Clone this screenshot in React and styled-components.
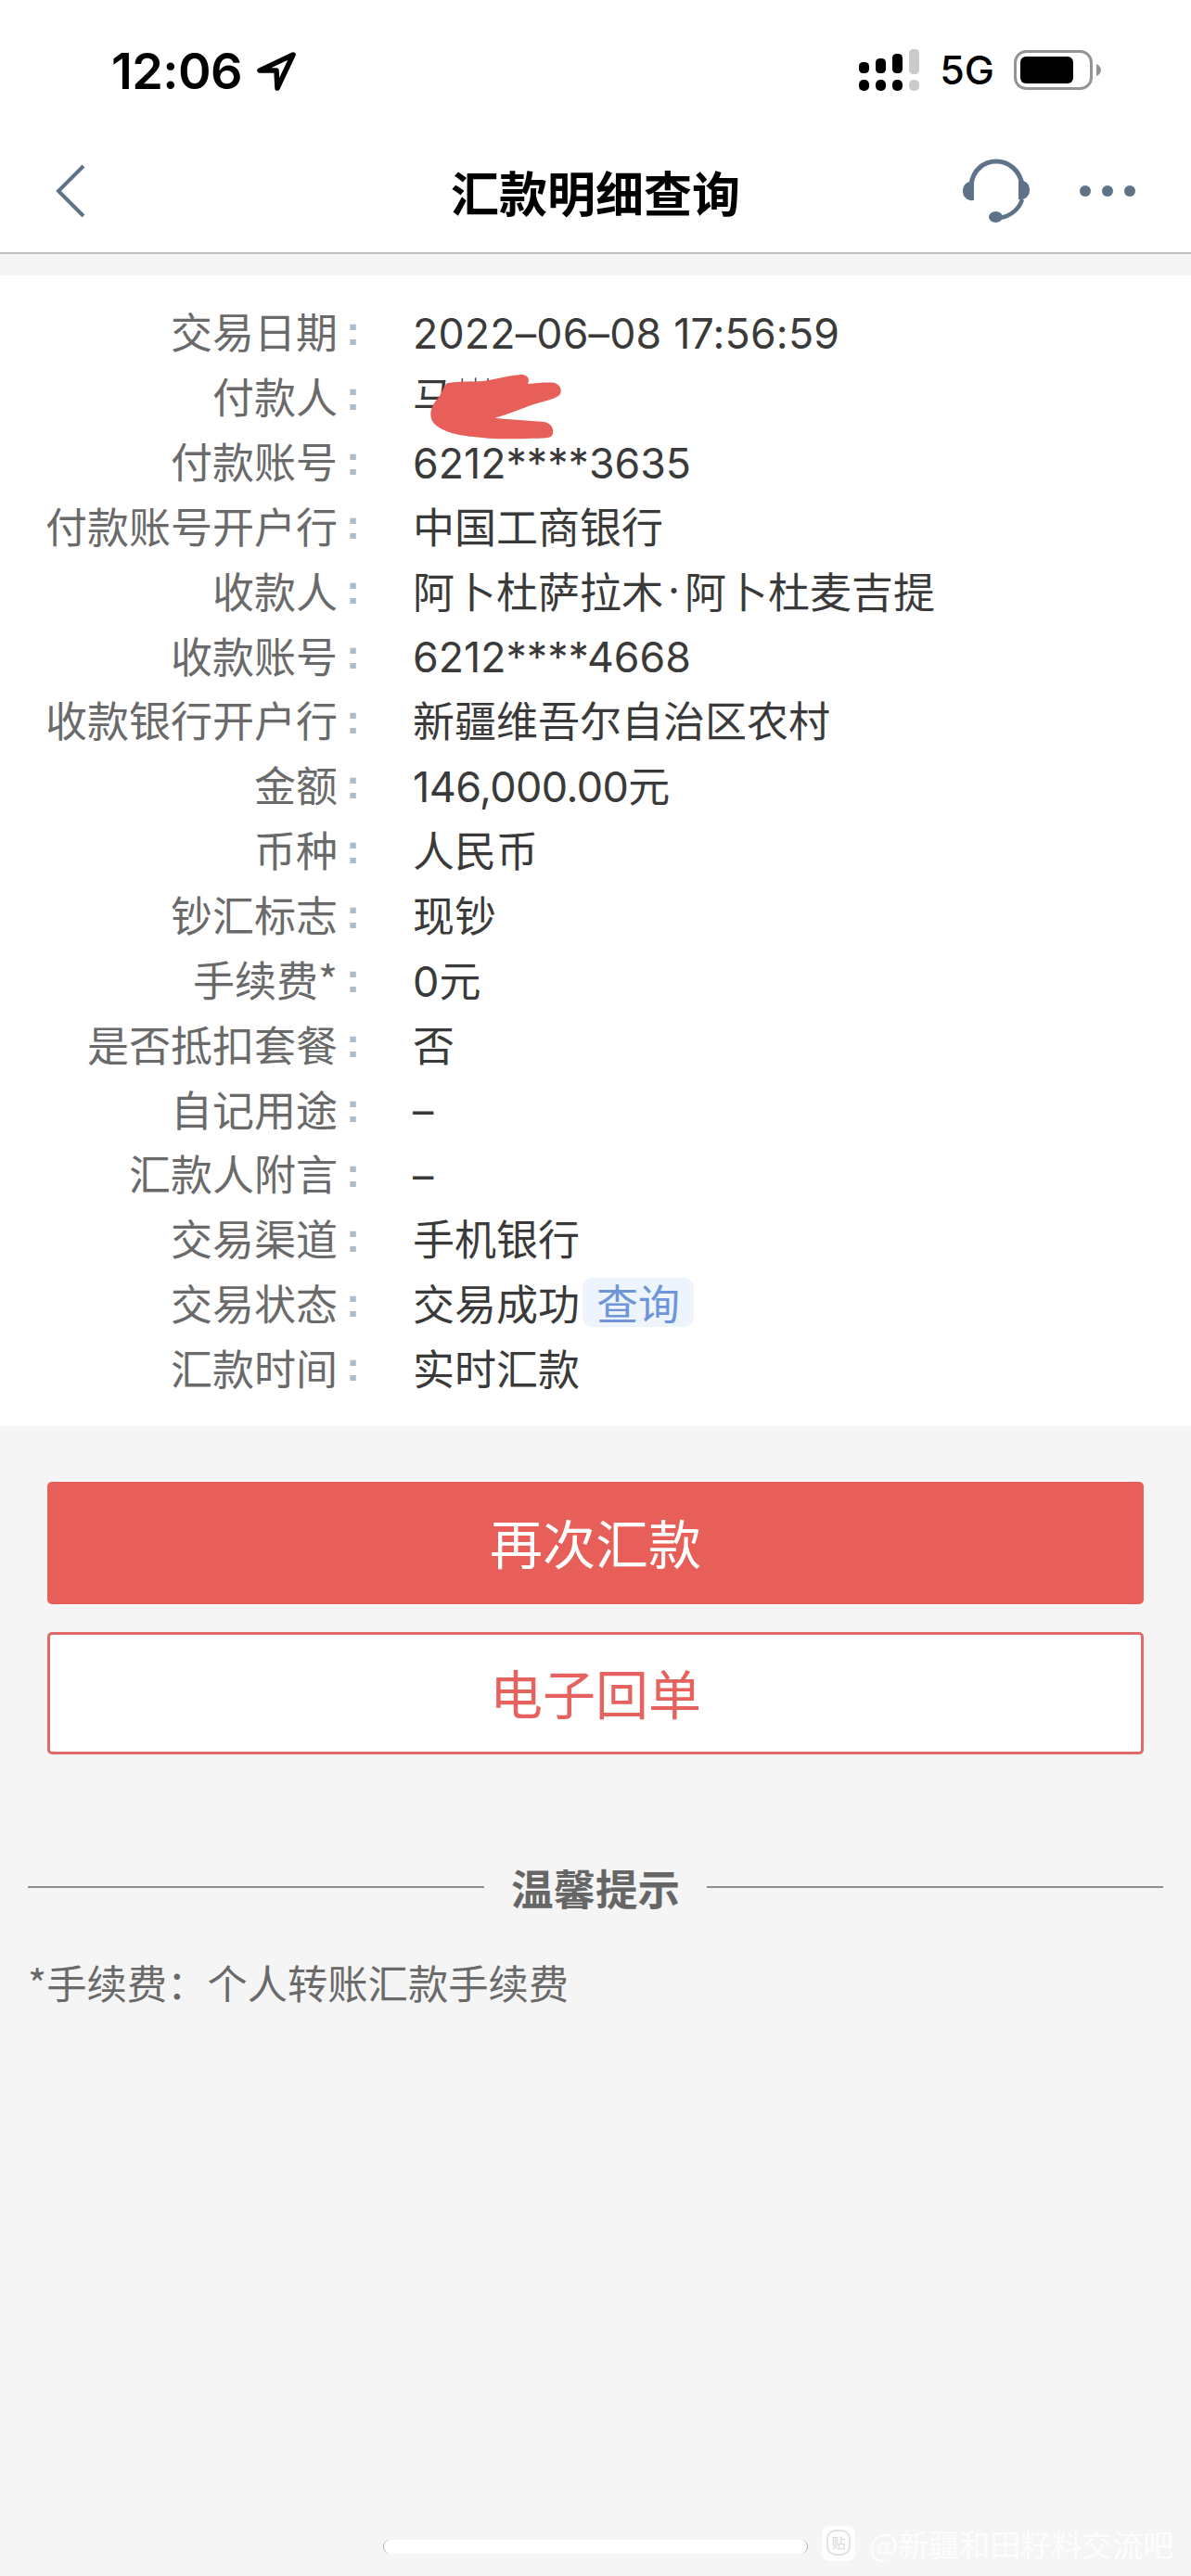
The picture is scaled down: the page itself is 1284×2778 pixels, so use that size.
import React from 'react';
import styled, { createGlobalStyle } from 'styled-components';

const CJK = '"Noto Sans CJK SC", "Noto Sans", sans-serif';
const RED = '#e85f5a';
const ICON = '#5f7388';

const Global = createGlobalStyle`
  html, body { margin: 0; padding: 0; background: #f5f5f5; }
  * { box-sizing: border-box; }
`;

const Page = styled.div`
  position: relative;
  width: 1284px;
  height: 2778px;
  overflow: hidden;
  background: #f5f5f5;
  font-family: Inter, ${CJK};
`;

const TopArea = styled.header`
  background: #fff;
  border-bottom: 2px solid #c0c0c0;
  height: 274px;
`;

const StatusBar = styled.div`
  height: 150px;
  display: flex;
  justify-content: space-between;
  padding: 53px 97px 0 120px;
  align-items: flex-start;
`;

const TimeGroup = styled.div`
  display: flex;
  align-items: center;
  gap: 15px;
  height: 48px;
`;

const Time = styled.span`
  font-family: Inter, sans-serif;
  font-weight: 600;
  font-size: 54px;
  letter-spacing: -0.6px;
  line-height: 48px;
  color: #000;
`;

const StatusRight = styled.div`
  display: flex;
  align-items: center;
  height: 45px;
`;

const FiveG = styled.span`
  font-family: Inter, sans-serif;
  font-weight: 500;
  font-size: 43px;
  line-height: 45px;
  color: #000;
  margin: 0 21px 0 22px;
`;

const NavBar = styled.nav`
  height: 122px;
  display: flex;
  align-items: center;
  justify-content: space-between;
  padding: 0 60px 10px 60px;
  position: relative;
`;

const NavTitle = styled.h1`
  position: absolute;
  left: 0;
  right: 0;
  top: 24px;
  margin: 0;
  text-align: center;
  font-family: ${CJK};
  font-weight: 700;
  font-size: 52px;
  line-height: 66px;
  color: #000;
`;

const NavActions = styled.div`
  display: flex;
  align-items: center;
  gap: 54px;
`;

const Card = styled.section`
  margin-top: 23px;
  background: #fff;
  padding: 25px 0 28px;
  height: 1241px;
`;

const Row = styled.div`
  display: grid;
  grid-template-columns: 364px 81px 1fr;
  align-items: center;
  height: 69.85px;
  position: relative;
`;

const Label = styled.span`
  text-align: right;
  font-size: 45px;
  color: #6a6a6a;
  font-family: ${CJK};
  font-weight: 400;
  white-space: nowrap;
`;

const Colon = styled.span`
  font-size: 45px;
  font-weight: 700;
  color: #aebcc8;
  font-family: "Liberation Sans", sans-serif;
  padding-left: 9px;
`;

const Value = styled.span`
  display: flex;
  align-items: center;
  font-size: ${p => (p.$digits ? '44.7px' : '45px')};
  letter-spacing: ${p => p.$spacing || '0'};
  padding-top: ${p => (p.$digits ? '6px' : '0')};
  color: #3a3a3a;
  font-family: Inter, ${CJK};
  white-space: nowrap;
`;

const NameDot = styled.span`
  padding: 0 5px;
`;

const Tag = styled.span`
  margin-left: 3px;
  padding: 0 15px;
  height: 53px;
  line-height: 53px;
  border-radius: 10px;
  background: #eef4fc;
  color: #6f94d8;
  font-family: ${CJK};
`;

const Blob = styled.svg`
  position: absolute;
  left: 440px;
  top: 2px;
`;

const Buttons = styled.div`
  margin-top: 60px;
  padding: 0 51px;
  display: flex;
  flex-direction: column;
  gap: 30px;
`;

const Button = styled.div`
  height: 132px;
  border-radius: 5px;
  padding-bottom: 5px;
  display: flex;
  align-items: center;
  justify-content: center;
  font-family: ${CJK};
  font-size: 57px;
  background: ${p => (p.$outline ? '#fff' : RED)};
  color: ${p => (p.$outline ? '#e5625f' : '#fff')};
  border: ${p => (p.$outline ? `3px solid #e0696a` : 'none')};
`;

const Tips = styled.div`
  margin-top: 113px;
  padding: 0 30px;
`;

const TipsHead = styled.div`
  display: flex;
  align-items: center;
  gap: 29px;
  height: 60px;
  font-family: ${CJK};
  font-weight: 700;
  font-size: 45.5px;
  color: #666;
  &::before, &::after {
    content: "";
    flex: 1;
    height: 2px;
    background: #8e8e8e;
  }
`;

const Note = styled.p`
  margin: 42px 0 0;
  font-family: ${CJK};
  font-size: 43.3px;
  line-height: 60px;
  color: #6a6a6a;
`;

const HomeBar = styled.div`
  position: absolute;
  left: 413px;
  top: 2739px;
  width: 458px;
  height: 15px;
  border-radius: 8px;
  background: #fff;
  border-left: 1px solid #aaa;
  border-right: 1px solid #aaa;
`;

const Watermark = styled.div`
  position: absolute;
  left: 885px;
  top: 2723px;
  display: flex;
  align-items: center;
  gap: 14px;
  height: 40px;
  font-family: ${CJK};
  font-size: 33px;
  color: rgba(255, 255, 255, 0.9);
  white-space: nowrap;
`;

const rows = [
  { label: '交易日期', value: '2022–06–08 17:56:59', digits: true, spacing: '0.2px' },
  { label: '付款人', value: '马' },
  { label: '付款账号', value: '6212****3635', digits: true },
  { label: '付款账号开户行', value: '中国工商银行' },
  { label: '收款人', value: <>阿卜杜萨拉木<NameDot>·</NameDot>阿卜杜麦吉提</> },
  { label: '收款账号', value: '6212****4668', digits: true },
  { label: '收款银行开户行', value: '新疆维吾尔自治区农村' },
  { label: '金额', value: '146,000.00元', spacing: '-0.6px' },
  { label: '币种', value: '人民币' },
  { label: '钞汇标志', value: '现钞' },
  { label: '手续费*', value: '0元' },
  { label: '是否抵扣套餐', value: '否' },
  { label: '自记用途', value: '–', digits: true },
  { label: '汇款人附言', value: '–', digits: true },
  { label: '交易渠道', value: '手机银行' },
  { label: '交易状态', value: '交易成功' },
  { label: '汇款时间', value: '实时汇款' },
];

const Arrow = () => (
  <svg width="44" height="44" viewBox="0 0 44 44">
    <path d="M40 4 L4 21 L22 21 L23 40 Z" fill="none" stroke="#000" strokeWidth="5.5" strokeLinejoin="round" />
  </svg>
);

const Signal = () => (
  <svg width="65" height="45" viewBox="0 0 65 45">
    <g fill="#000">
      <rect x="0" y="14" width="11" height="12" rx="4.5" />
      <rect x="18" y="10" width="11" height="16" rx="4.5" />
      <rect x="36" y="5" width="11" height="21" rx="4.5" />
      <rect x="0" y="33" width="11" height="12" rx="5" />
      <rect x="18" y="33" width="11" height="12" rx="5" />
      <rect x="36" y="33" width="11" height="12" rx="5" />
    </g>
    <g fill="#cbcbcb">
      <rect x="54" y="0" width="11" height="27" rx="4.5" />
      <rect x="54" y="33" width="11" height="12" rx="5" />
    </g>
  </svg>
);

const Battery = () => (
  <svg width="94" height="43" viewBox="0 0 94 43">
    <rect x="1.5" y="1.5" width="82" height="40" rx="12" fill="none" stroke="#949494" strokeWidth="3" />
    <rect x="7" y="7" width="57" height="29" rx="6" fill="#000" />
    <path d="M89 15 C92 16 94 19 94 21.5 C94 24 92 27 89 28 Z" fill="#949494" />
  </svg>
);

const Back = () => (
  <svg width="32" height="58" viewBox="0 0 32 58">
    <path d="M30 2 L3 29 L30 56" fill="none" stroke={ICON} strokeWidth="4" />
  </svg>
);

const Headset = () => (
  <svg width="72" height="70" viewBox="0 0 72 70">
    <path d="M9 28 C11 12 23 3 36 3 C49 3 61 12 64 28" fill="none" stroke={ICON} strokeWidth="5" />
    <path d="M64 44 C61 54 52 62 40 64" fill="none" stroke={ICON} strokeWidth="4.5" />
    <path d="M12 25 L12 45 C4 46 0 41 0 35 C0 29 4 24 12 25 Z" fill={ICON} />
    <path d="M60 24 L60 44 C68 45 72 40 72 34 C72 28 68 23 60 24 Z" fill={ICON} />
    <ellipse cx="35.5" cy="63" rx="7.5" ry="6" fill={ICON} />
  </svg>
);

const Dots = () => (
  <svg width="60" height="14" viewBox="0 0 60 14">
    <circle cx="6" cy="7" r="6" fill={ICON} />
    <circle cx="30" cy="7" r="6" fill={ICON} />
    <circle cx="54" cy="7" r="6" fill={ICON} />
  </svg>
);

const RedBlob = () => (
  <Blob width="180" height="90" viewBox="0 0 540 270">
    <g stroke="#555" strokeWidth="5">
      <path d="M175 42 V56" />
      <path d="M218 40 V54" />
      <path d="M258 42 V54" />
    </g>
    <path
      d="M125 58 C170 50 215 54 250 50 C290 44 330 32 365 30 C385 30 395 42 387 60 C420 56 450 54 472 56 C492 62 500 80 490 96 C470 112 430 118 400 128 C360 142 320 160 280 170 C330 176 390 178 440 183 C465 188 475 210 465 228 C455 237 430 236 400 236 C350 238 300 238 260 236 C210 232 160 226 130 215 C100 204 78 190 74 168 C70 148 78 126 100 102 C110 88 115 70 125 58 Z"
      fill={RED}
    />
  </Blob>
);

const TieBa = () => (
  <svg width="38" height="40" viewBox="0 0 38 40">
    <rect x="1" y="1" width="36" height="38" rx="8" fill="rgba(255,255,255,0.9)" />
    <rect x="7" y="6" width="24" height="26" rx="9" fill="none" stroke="#e2e2e2" strokeWidth="2" />
    <text x="19" y="25" fontSize="15" textAnchor="middle" fill="#d8d8d8" fontFamily={CJK}>贴</text>
  </svg>
);

export default function App() {
  return (
    <Page>
      <Global />
      <TopArea>
        <StatusBar>
          <TimeGroup>
            <Time>12:06</Time>
            <Arrow />
          </TimeGroup>
          <StatusRight>
            <Signal />
            <FiveG>5G</FiveG>
            <Battery />
          </StatusRight>
        </StatusBar>
        <NavBar>
          <Back />
          <NavTitle>汇款明细查询</NavTitle>
          <NavActions>
            <Headset />
            <Dots />
          </NavActions>
        </NavBar>
      </TopArea>
      <Card>
        {rows.map(({ label, value, digits, spacing }) => (
          <Row key={label}>
            <Label>{label}</Label>
            <Colon>:</Colon>
            <Value $digits={digits} $spacing={spacing}>
              {value}
              {label === '交易状态' && <Tag>查询</Tag>}
            </Value>
            {label === '付款人' && <RedBlob />}
          </Row>
        ))}
      </Card>
      <Buttons>
        <Button>再次汇款</Button>
        <Button $outline>电子回单</Button>
      </Buttons>
      <Tips>
        <TipsHead>温馨提示</TipsHead>
        <Note>*手续费：个人转账汇款手续费</Note>
      </Tips>
      <HomeBar />
      <Watermark>
        <TieBa />
        <span>@新疆和田籽料交流吧</span>
      </Watermark>
    </Page>
  );
}
